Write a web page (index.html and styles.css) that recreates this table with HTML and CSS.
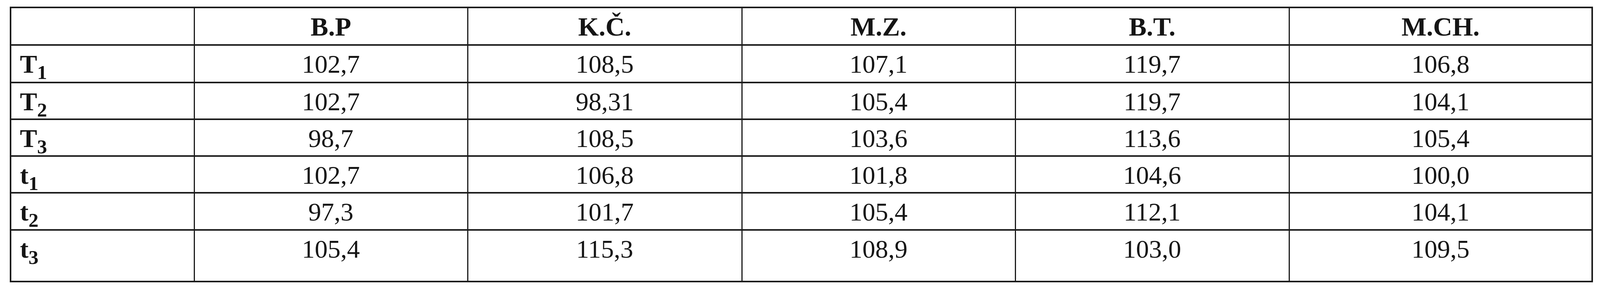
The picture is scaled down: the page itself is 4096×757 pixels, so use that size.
FILE: index.html
```html
<!DOCTYPE html>
<html lang="cs">
<head>
<meta charset="utf-8">
<title>Tabulka</title>
<link rel="stylesheet" href="styles.css">
</head>
<body>
<table class="data">
  <colgroup>
    <col class="c-label">
    <col class="c-bp">
    <col class="c-kc">
    <col class="c-mz">
    <col class="c-bt">
    <col class="c-mch">
  </colgroup>
  <thead>
    <tr class="head">
      <th></th>
      <th>B.P</th>
      <th>K.Č.</th>
      <th>M.Z.</th>
      <th>B.T.</th>
      <th>M.CH.</th>
    </tr>
  </thead>
  <tbody>
    <tr class="r1">
      <th class="lab">T<sub>1</sub></th>
      <td>102,7</td><td>108,5</td><td>107,1</td><td>119,7</td><td>106,8</td>
    </tr>
    <tr class="r2">
      <th class="lab">T<sub>2</sub></th>
      <td>102,7</td><td>98,31</td><td>105,4</td><td>119,7</td><td>104,1</td>
    </tr>
    <tr class="r3">
      <th class="lab">T<sub>3</sub></th>
      <td>98,7</td><td>108,5</td><td>103,6</td><td>113,6</td><td>105,4</td>
    </tr>
    <tr class="r4">
      <th class="lab">t<sub>1</sub></th>
      <td>102,7</td><td>106,8</td><td>101,8</td><td>104,6</td><td>100,0</td>
    </tr>
    <tr class="r5">
      <th class="lab">t<sub>2</sub></th>
      <td>97,3</td><td>101,7</td><td>105,4</td><td>112,1</td><td>104,1</td>
    </tr>
    <tr class="r6">
      <th class="lab">t<sub>3</sub></th>
      <td>105,4</td><td>115,3</td><td>108,9</td><td>103,0</td><td>109,5</td>
    </tr>
  </tbody>
</table>
</body>
</html>
```

FILE: styles.css
```css
html, body {
  margin: 0;
  padding: 0;
  background: #ffffff;
}

body {
  padding: 17px 0 0 25px;
  font-family: "Liberation Serif", "Times New Roman", serif;
  color: #151515;
}

.data {
  border-collapse: collapse;
  table-layout: fixed;
  width: 4049px;
  border: 4px solid #1b1b1b;
}

.c-label { width: 470px; }
.c-bp    { width: 700px; }
.c-kc    { width: 702px; }
.c-mz    { width: 700px; }
.c-bt    { width: 701px; }
.c-mch   { width: 776px; }

.data th,
.data td {
  border-top: 4px solid #1b1b1b;
  border-bottom: 4px solid #1b1b1b;
  border-left: 3px solid #1b1b1b;
  border-right: 3px solid #1b1b1b;
  vertical-align: top;
  text-align: center;
  padding: 14px 0 0 0;
  line-height: 66px;
  white-space: nowrap;
}

.data td {
  font-size: 66px;
  font-weight: normal;
}

.head th {
  font-size: 68px;
  font-weight: bold;
}

.data th.lab {
  text-align: left;
  padding-left: 22px;
  font-size: 66px;
  font-weight: bold;
}

.lab sub {
  font-size: 51px;
  vertical-align: -16px;
  line-height: 0;
}

.head { height: 96px; }
.r1   { height: 96px; }
.r2   { height: 94px; }
.r3   { height: 94px; }
.r4   { height: 94px; }
.r5   { height: 95px; }
.r6   { height: 132px; }
```
